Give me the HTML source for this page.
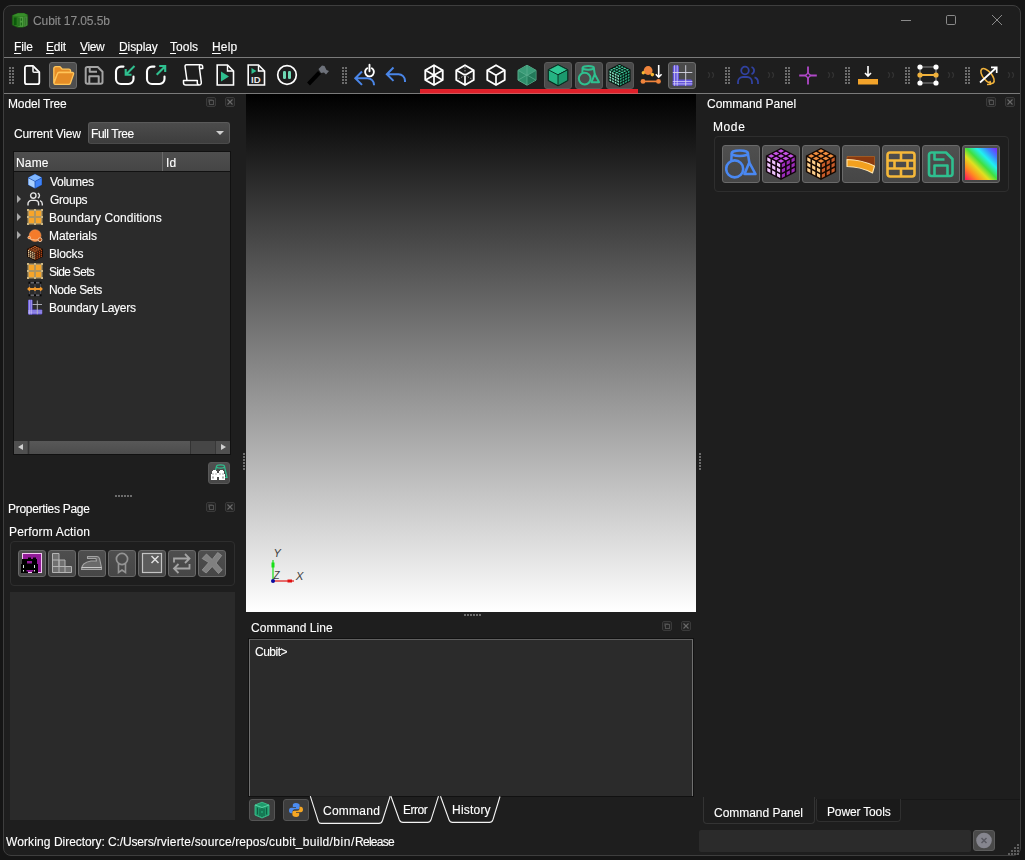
<!DOCTYPE html>
<html lang="en">
<head>
<meta charset="utf-8">
<title>Cubit 17.05.5b</title>
<style>
*{box-sizing:border-box;margin:0;padding:0}
html,body{width:1025px;height:860px;overflow:hidden;background:#151515;}
body{font-family:"Liberation Sans",sans-serif;font-size:12px;color:#fff;position:relative;}
.abs,.abs>*{position:absolute}
#win{position:absolute;left:3px;top:5px;width:1018px;height:851px;background:#1e1e1e;border:1px solid #3e3e3e;border-radius:8px;}
.t{-webkit-text-stroke:0.12px currentColor;will-change:transform;position:absolute;white-space:nowrap;line-height:14px;height:14px;color:#fff;}
.hl{position:absolute;height:1px;background:#7a7a7a}
.ic{position:absolute;width:24px;height:24px;overflow:visible}
.press{position:absolute;width:28px;height:27px;background:#4a4a4a;border-radius:3px;border:1px solid #5a5a5a}
.grip{position:absolute;width:5px;height:17px;background:linear-gradient(#1e1e1e,#1e1e1e) 2px 0/1px 100% no-repeat,repeating-linear-gradient(#6c6c6c 0 2px,#1e1e1e 2px 3px)}
.chev{position:absolute;color:#3c3c3c;font-size:13px;line-height:14px;letter-spacing:-1px}
.dbtn{position:absolute;width:10px;height:10px;border:1px solid #3c3c3c;border-radius:2px;background:#2a2a2a}

.dock-f,.dock-c{position:absolute;width:10px;height:10px;border:1px solid #3a3a3a;border-radius:2px;background:#262626}
.tree-ic{position:absolute;width:16px;height:16px;left:27px}
.exp{position:absolute;left:17px;width:0;height:0;border-left:4px solid #a8a8a8;border-top:4px solid transparent;border-bottom:4px solid transparent}
.pbtn{position:absolute;width:28px;height:27px;top:550px;background:linear-gradient(#4e4e4e,#464646);border-radius:3px;border:1px solid #686868}
.mbtn{position:absolute;width:38px;height:38px;top:145px;background:linear-gradient(#4f4f4f,#464646);border-radius:3px;border:1px solid #6a6a6a}
.mbtn svg,.pbtn svg{position:absolute}
.hdots{position:absolute;height:2px;background-image:linear-gradient(90deg,#6c6c6c 0 2px,transparent 2px);background-size:3px 2px}
.vdots{position:absolute;width:2px;background-image:linear-gradient(#6c6c6c 0 2px,transparent 2px);background-size:2px 3px}
u{text-decoration:underline;text-underline-offset:2px;text-decoration-thickness:1px}
</style>
</head>
<body>
<div id="win"></div>
<!-- TITLE BAR -->
<div id="titlebar" class="abs">
  <svg class="ic" style="left:10px;top:11px;width:20px;height:18px" viewBox="0 0 20 18">
    <path d="M2.300 4.500 8 2.300h6l3.700 1.700v10L13 16.300H7.500L2.300 14Z" fill="#2a7a1e" stroke="#1a5c12" stroke-width=".6" stroke-linejoin="round"/>
    <path d="M2.300 4.500 8 2.300h6l3.700 1.700-4 1.200H7Z" fill="#388e2a"/>
    <path d="M3.800 6.500h2.800v7.500H3.800z" fill="#0d5a0c"/>
    <path d="M8.300 5.800h5v10h-5z" fill="#4c9c3e"/>
    <path d="M9 6.500v8.500M11.300 7.200v2.600M11.300 11.500v3" stroke="#136012" stroke-width="1.100" fill="none"/>
    <path d="M14.300 5.500h3v9l-3 1.500z" fill="#4a8a40"/>
    <path d="M15.700 6.500v8" stroke="#2f7426" stroke-width="1" fill="none"/>
  </svg>
  <div class="t" style="left:33.2px;top:14px;color:#8c8c8c;letter-spacing:-0.09px">Cubit 17.05.5b</div>
  <svg style="left:896px;top:10px;width:112px;height:20px" viewBox="0 0 112 20">
    <path d="M5 10.5h10" stroke="#8a8a8a" stroke-width="1" fill="none"/>
    <rect x="50.5" y="5.5" width="9" height="9" rx="1.2" stroke="#8a8a8a" stroke-width="1" fill="none"/>
    <path d="M96 5l10 10M106 5l-10 10" stroke="#8a8a8a" stroke-width="1" fill="none"/>
  </svg>
</div>
<!-- MENU BAR -->
<div id="menubar" class="abs">
  <div class="t" style="left:14.4px;top:40px;letter-spacing:-0.13px"><u>F</u>ile</div>
  <div class="t" style="left:45.5px;top:40px;letter-spacing:-0.17px"><u>E</u>dit</div>
  <div class="t" style="left:80.2px;top:40px;letter-spacing:-0.4px"><u>V</u>iew</div>
  <div class="t" style="left:119.3px;top:40px;letter-spacing:-0.08px"><u>D</u>isplay</div>
  <div class="t" style="left:170.0px;top:40px;letter-spacing:0.02px"><u>T</u>ools</div>
  <div class="t" style="left:212.4px;top:40px;letter-spacing:0.17px"><u>H</u>elp</div>
  <div class="hl" style="left:4px;top:57px;width:1016px"></div>
</div>
<!-- TOOLBAR -->
<div id="toolbar" class="abs">
  <div class="hl" style="left:4px;top:93px;width:1016px"></div>
  <div class="grip" style="left:9px;top:67px"></div>
  <!-- new -->
  <svg class="ic" style="left:19px;top:63px" viewBox="0 0 24 24"><path d="M7.9 2.9H14l6.300 6.300v10a2 2 0 0 1-2 2H7.900a2 2 0 0 1-2-2V4.900a2 2 0 0 1 2-2Z" fill="none" stroke="#fff" stroke-width="1.800" stroke-linejoin="round"/><path d="M14 3v5.200a1 1 0 0 0 1 1h5.200" fill="none" stroke="#f0f0f0" stroke-width="1.600"/></svg>
  <!-- open -->
  <div class="press" style="left:49px;top:62px;height:27px;border-color:#6a6a6a;background:#4e4e4e"></div>
  <svg class="ic" style="left:51px;top:63px" viewBox="0 0 24 24"><path d="M2.8 5.6a1.900 1.900 0 0 1 1.900-1.900h4.300l2.300 2.500h6.400a1.900 1.900 0 0 1 1.900 1.900V9.500H7.300L2.800 19.500Z" fill="#e48c26" stroke="#ffc55a" stroke-width="1.300" stroke-linejoin="round"/><path d="M3 20 6.500 10.600a1.600 1.600 0 0 1 1.500-1.100h13.600a1.100 1.100 0 0 1 1 1.500l-3.200 9.200a1.600 1.600 0 0 1-1.500 1.100H4a1 1 0 0 1-1-1.300Z" fill="#e48c26" stroke="#ffc55a" stroke-width="1.300" stroke-linejoin="round"/></svg>
  <!-- save -->
  <svg class="ic" style="left:82px;top:63px" viewBox="0 0 24 24"><path d="M5.500 4h10.300l4.700 4.700V19a1.800 1.800 0 0 1-1.800 1.800H5.500A1.800 1.800 0 0 1 3.700 19V5.800A1.800 1.800 0 0 1 5.500 4Z" fill="none" stroke="#a4a4a4" stroke-width="2" stroke-linejoin="round"/><path d="M7.700 4.200v4.500h7.300M7.300 20.500v-7.200h9.400v7.200" fill="none" stroke="#a4a4a4" stroke-width="2" stroke-linejoin="round"/></svg>
  <!-- import -->
  <svg class="ic" style="left:113px;top:63px" viewBox="0 0 24 24"><path d="M10.5 3.600H8a5 5 0 0 0-5 5V16a5 5 0 0 0 5 5h7.500a5 5 0 0 0 5-5v-2.500" fill="none" stroke="#fff" stroke-width="2.100" stroke-linecap="round"/><path d="M21.500 3l-8.500 8.500M12.700 6v5.800h5.800" fill="none" stroke="#2fbf8f" stroke-width="2.100"/></svg>
  <!-- export -->
  <svg class="ic" style="left:144px;top:63px" viewBox="0 0 24 24"><path d="M10.5 3.600H8a5 5 0 0 0-5 5V16a5 5 0 0 0 5 5h7.500a5 5 0 0 0 5-5v-2.500" fill="none" stroke="#fff" stroke-width="2.100" stroke-linecap="round"/><path d="M12.700 11.800l8.500-8.500M15.200 3h6v6" fill="none" stroke="#2fbf8f" stroke-width="2.100"/></svg>
  <!-- scroll -->
  <svg class="ic" style="left:181px;top:63px" viewBox="0 0 24 24"><path d="M5.500 1.800h14a2.200 2.200 0 0 1 2.200 2.200v1.500h-3.200M5.500 1.800c-1.200 0-1.600 1-1.400 2.200L6 17.500M18.500 5.500c-.2-1.500-.2-3.700 1-3.700M18.500 5.500l1.800 13.800a2.300 2.300 0 0 1-2.300 2.700H4.800a2.300 2.300 0 0 1-2.300-2.300v-2.200h13.800v2.200a2 2 0 0 0 2 2.300" fill="none" stroke="#fff" stroke-width="1.500" stroke-linejoin="round"/></svg>
  <!-- play doc -->
  <svg class="ic" style="left:213px;top:63px" viewBox="0 0 24 24"><path d="M4.200 2h10.300l6 6v14H4.200Z" fill="none" stroke="#fff" stroke-width="1.600"/><path d="M14.500 2.300v5.700h5.700" fill="none" stroke="#fff" stroke-width="1.400"/><path d="M8 8.500l8 5-8 5Z" fill="#2fbf8f"/></svg>
  <!-- id doc -->
  <svg class="ic" style="left:244px;top:63px" viewBox="0 0 24 24"><path d="M4.200 2h10.300l6 6v14H4.200Z" fill="none" stroke="#fff" stroke-width="1.600"/><path d="M14.500 2.300v5.700h5.700" fill="none" stroke="#fff" stroke-width="1.400"/><path d="M7.500 5l5 3-5 3Z" fill="#2fbf8f"/><text x="7" y="19.500" font-family="Liberation Sans, sans-serif" font-weight="bold" font-size="9.500" fill="#e8e8e8">ID</text></svg>
  <!-- pause -->
  <svg class="ic" style="left:275px;top:63px" viewBox="0 0 24 24"><circle cx="12" cy="12" r="9.300" fill="none" stroke="#fff" stroke-width="1.700"/><rect x="8" y="8" width="3" height="8" rx="1.200" fill="#6fd9b4"/><rect x="13" y="8" width="3" height="8" rx="1.200" fill="#6fd9b4"/></svg>
  <!-- hammer -->
  <svg class="ic" style="left:306px;top:63px" viewBox="0 0 24 24"><path d="M2.500 21l11-11.500" stroke="#000" stroke-width="4" stroke-linecap="butt"/><path d="M12.500 6l3.500-3.500 2.500.5 2 4 2.500 1-3 3.500-2-2-3 .5Z" fill="#6e727b"/></svg>
  <div class="grip" style="left:342px;top:67px"></div>
  <!-- undo power -->
  <svg class="ic" style="left:353px;top:63px" viewBox="0 0 24 24"><path d="M9 8.500l-6.700 6.700 6.700 6.700M3 15.200H14.500a6.500 6.500 0 0 1 6.500 6.500v.5" fill="none" stroke="#4a86e8" stroke-width="2"/><path d="M14.200 5.200a4.400 4.400 0 1 0 4.600 0M16.500 1.800v6.500" fill="none" stroke="#fff" stroke-width="1.900" stroke-linecap="round"/></svg>
  <!-- undo -->
  <svg class="ic" style="left:384px;top:63px" viewBox="0 0 24 24"><path d="M9.500 4.500l-6.700 6.700 6.700 6.700M3.500 11.200H14.500a6.500 6.500 0 0 1 6.500 6.500v1.300" fill="none" stroke="#4a86e8" stroke-width="2"/></svg>
  <!-- wire cube 1 -->
  <svg class="ic" style="left:422px;top:63px" viewBox="0 0 24 24"><path d="M12 2.200l8.700 5v9.800l-8.700 5-8.700-5V7.200Z" fill="none" stroke="#fff" stroke-width="1.900" stroke-linejoin="round"/><path d="M12 2.500v19M3.500 7.300l17 9.600M20.500 7.300l-17 9.600" fill="none" stroke="#fff" stroke-width="1.700"/></svg>
  <!-- wire cube 2 -->
  <svg class="ic" style="left:453px;top:63px" viewBox="0 0 24 24"><path d="M12 2.200l8.700 5v9.800l-8.700 5-8.700-5V7.200Z" fill="none" stroke="#fff" stroke-width="1.900" stroke-linejoin="round"/><path d="M3.500 7.300 12 12.200l8.500-4.900M12 12.200v9.500" fill="none" stroke="#fff" stroke-width="1.700"/><path d="M12 4v7M12 12.200l-7 4M12 12.200l7 4" fill="none" stroke="#aaa" stroke-width="1" stroke-dasharray="1.500 1.500"/></svg>
  <!-- wire cube 3 -->
  <svg class="ic" style="left:484px;top:63px" viewBox="0 0 24 24"><path d="M12 2.200l8.700 5v9.800l-8.700 5-8.700-5V7.200Z" fill="none" stroke="#fff" stroke-width="1.900" stroke-linejoin="round"/><path d="M3.500 7.300 12 12.200l8.500-4.900M12 12.200v9.500" fill="none" stroke="#fff" stroke-width="1.700"/></svg>
  <!-- green translucent cube -->
  <svg class="ic" style="left:515px;top:63px" viewBox="0 0 24 24"><path d="M12 2.200l9 5.100v9.800l-9 5.100-9-5.100V7.300Z" fill="#2e8e6a" stroke="#58aa8a" stroke-width="1"/><path d="M12 2.500l8.700 5-8.700 5-8.700-5Z" fill="#3b9c78"/><path d="M12 12.500v9.500l8.700-5V7.500Z" fill="#237a5a"/><path d="M12 2.500V12M12 12l-8.700 5M12 12l8.700 5M3.300 7.500l8.700 5 8.700-5M12 12.500V22" fill="none" stroke="#5fb292" stroke-width=".7"/></svg>
  <!-- green cube -->
  <div class="press" style="left:544px;top:62px"></div>
  <svg class="ic" style="left:546px;top:64px" viewBox="0 0 24 24"><path d="M12 .8l9.700 5v10.600L12 21.800l-9.700-5.400V5.800Z" fill="#25b383" stroke="#07281c" stroke-width="1.100" stroke-linejoin="round"/><path d="M12 .8l9.700 5L12 10.800 2.300 5.800Z" fill="#2fc794" stroke="#07281c" stroke-width=".9" stroke-linejoin="round"/><path d="M12 10.800v11l9.700-5.400V5.800Z" fill="#1b9a6e" stroke="#07281c" stroke-width=".9" stroke-linejoin="round"/></svg>
  <!-- shapes -->
  <div class="press" style="left:575px;top:62px"></div>
  <svg class="ic" style="left:577px;top:64px" viewBox="0 0 24 24"><g transform="translate(1 .2) scale(.69)" fill="none" stroke="#2fbf8f" stroke-width="2.900" stroke-linejoin="round"><ellipse cx="14.800" cy="5.300" rx="8.200" ry="2.700"/><path d="M6.700 5.500 6.300 12.500M22.900 5.500l1.400 9"/><circle cx="9.700" cy="20.900" r="8.500"/><path d="M24.300 14.500 30.500 26H19.500Z"/></g></svg>
  <!-- mesh cube -->
  <div class="press" style="left:606px;top:62px"></div>
  <svg class="ic" style="left:608px;top:64px" viewBox="0 0 24 24"><path d="M11.5 0.5 L21.96 5.9 L21.96 16.9 L11.5 22.3 L1.04 16.9 L1.04 5.9Z" fill="#03130d" stroke="#03130d" stroke-width="1.2" stroke-linejoin="round"/><path d="M1.92 5.9 L3.65 5.01 L5.38 5.87 L3.65 6.76ZM4.54 7.21 L6.27 6.32 L7.99 7.19 L6.27 8.08ZM7.16 8.52 L8.88 7.63 L10.61 8.5 L8.88 9.39ZM9.77 9.84 L11.5 8.94 L13.23 9.81 L11.5 10.7ZM4.54 4.55 L6.27 3.66 L7.99 4.52 L6.27 5.41ZM7.16 5.86 L8.88 4.97 L10.61 5.83 L8.88 6.73ZM9.77 7.17 L11.5 6.28 L13.23 7.15 L11.5 8.04ZM12.39 8.48 L14.12 7.59 L15.84 8.46 L14.12 9.35ZM7.16 3.2 L8.88 2.3 L10.61 3.17 L8.88 4.06ZM9.77 4.51 L11.5 3.62 L13.23 4.48 L11.5 5.37ZM12.39 5.82 L14.12 4.93 L15.84 5.8 L14.12 6.69ZM15.01 7.13 L16.73 6.24 L18.46 7.11 L16.73 8ZM9.77 1.84 L11.5 0.95 L13.23 1.82 L11.5 2.71ZM12.39 3.16 L14.12 2.27 L15.84 3.13 L14.12 4.02ZM15.01 4.47 L16.73 3.58 L18.46 4.44 L16.73 5.34ZM17.62 5.78 L19.35 4.89 L21.08 5.76 L19.35 6.65Z" fill="#45cfa0"/><path d="M1.48 6.6 L3.21 7.46 L3.21 9.27 L1.48 8.41ZM1.48 9.34 L3.21 10.21 L3.21 12.02 L1.48 11.16ZM1.48 12.09 L3.21 12.96 L3.21 14.77 L1.48 13.9ZM1.48 14.84 L3.21 15.7 L3.21 17.52 L1.48 16.65ZM4.1 7.91 L5.82 8.77 L5.82 10.59 L4.1 9.72ZM4.1 10.66 L5.82 11.52 L5.82 13.33 L4.1 12.47ZM4.1 13.4 L5.82 14.27 L5.82 16.08 L4.1 15.22ZM4.1 16.15 L5.82 17.02 L5.82 18.83 L4.1 17.96ZM6.71 9.22 L8.44 10.09 L8.44 11.9 L6.71 11.03ZM6.71 11.97 L8.44 12.83 L8.44 14.65 L6.71 13.78ZM6.71 14.72 L8.44 15.58 L8.44 17.39 L6.71 16.53ZM6.71 17.46 L8.44 18.33 L8.44 20.14 L6.71 19.28ZM9.33 10.53 L11.06 11.4 L11.06 13.21 L9.33 12.35ZM9.33 13.28 L11.06 14.15 L11.06 15.96 L9.33 15.09ZM9.33 16.03 L11.06 16.89 L11.06 18.71 L9.33 17.84ZM9.33 18.78 L11.06 19.64 L11.06 21.45 L9.33 20.59Z" fill="#8ce8c8"/><path d="M11.94 11.41 L13.67 10.54 L13.67 12.38 L11.94 13.24ZM11.94 14.19 L13.67 13.33 L13.67 15.16 L11.94 16.03ZM11.94 16.98 L13.67 16.11 L13.67 17.95 L11.94 18.82ZM11.94 19.76 L13.67 18.9 L13.67 20.74 L11.94 21.6ZM14.56 10.09 L16.29 9.23 L16.29 11.07 L14.56 11.93ZM14.56 12.88 L16.29 12.01 L16.29 13.85 L14.56 14.72ZM14.56 15.67 L16.29 14.8 L16.29 16.64 L14.56 17.5ZM14.56 18.45 L16.29 17.59 L16.29 19.42 L14.56 20.29ZM17.18 8.78 L18.9 7.91 L18.9 9.75 L17.18 10.62ZM17.18 11.57 L18.9 10.7 L18.9 12.54 L17.18 13.41ZM17.18 14.35 L18.9 13.49 L18.9 15.33 L17.18 16.19ZM17.18 17.14 L18.9 16.27 L18.9 18.11 L17.18 18.98ZM19.79 7.47 L21.52 6.6 L21.52 8.44 L19.79 9.31ZM19.79 10.25 L21.52 9.39 L21.52 11.23 L19.79 12.09ZM19.79 13.04 L21.52 12.17 L21.52 14.01 L19.79 14.88ZM19.79 15.83 L21.52 14.96 L21.52 16.8 L19.79 17.67Z" fill="#2fa880"/></svg>
  <div style="left:420px;top:89px;width:218px;height:5px;background:linear-gradient(#e0202a 0 4px,#c95a5e 4px)"></div>
  <!-- nodes/arrow -->
  <svg class="ic" style="left:639px;top:63px" viewBox="0 0 24 24"><path d="M4 18.400h15.500" stroke="#f0843c" stroke-width="1.700"/><circle cx="4" cy="18.400" r="2.400" fill="#f0843c"/><circle cx="19.500" cy="18.400" r="2.400" fill="#f0843c"/><circle cx="9.100" cy="7.500" r="4.400" fill="#f0843c"/><circle cx="4.300" cy="9.700" r="1.700" fill="#f7b733"/><circle cx="13.300" cy="11.600" r="1.800" fill="#f7b733"/><path d="M19.700 2v12M16.800 11.300l2.900 2.900 2.900-2.900" fill="none" stroke="#fff" stroke-width="1.600"/></svg>
  <!-- grid -->
  <div class="press" style="left:668px;top:62px;border-color:#6c6c6c;height:27px"></div>
  <svg class="ic" style="left:670px;top:64px" viewBox="0 0 24 24"><rect x="2.800" y="1.200" width="6.200" height="20.600" rx="1.500" fill="#6253dc"/><rect x="2.800" y="15.500" width="19.500" height="6.300" rx="1.500" fill="#6253dc"/><path d="M4.600 1.200v20.600M7.200 1.200v20.600M2.800 17.500h19.500M2.800 19.900h19.500" fill="none" stroke="#e4defc" stroke-width=".7"/><path d="M15.700 1.200v20.600M2.800 8.500h19.500" fill="none" stroke="#d8d8e4" stroke-width=".9"/></svg>
  <svg style="left:707px;top:71px;width:9px;height:8px" viewBox="0 0 9 8"><path d="M1 1.200q3.200 2.800 0 5.600M5 1.200q3.200 2.800 0 5.600" fill="none" stroke="#323232" stroke-width="1.300"/></svg>
  <div class="grip" style="left:725px;top:67px"></div>
  <!-- people -->
  <svg class="ic" style="left:736px;top:63px" viewBox="0 0 24 24"><circle cx="9" cy="7.500" r="3.800" fill="none" stroke="#3142a0" stroke-width="1.800"/><path d="M2 21v-2a5 5 0 0 1 5-5h4a5 5 0 0 1 5 5v2" fill="none" stroke="#3142a0" stroke-width="1.800"/><path d="M15.500 4a3.800 3.800 0 0 1 0 7.200M18.500 14.300a5 5 0 0 1 3.500 4.700v2" fill="none" stroke="#3142a0" stroke-width="1.800"/></svg>
  <svg style="left:767px;top:71px;width:9px;height:8px" viewBox="0 0 9 8"><path d="M1 1.200q3.200 2.800 0 5.600M5 1.200q3.200 2.800 0 5.600" fill="none" stroke="#323232" stroke-width="1.300"/></svg>
  <div class="grip" style="left:785px;top:67px"></div>
  <!-- plus -->
  <svg class="ic" style="left:796px;top:63px" viewBox="0 0 24 24"><path d="M12 3.500v18M3.200 12.500h17.600" stroke="#b048c8" stroke-width="1.800"/><path d="M12 10 14.500 12.500 12 15 9.500 12.500Z" fill="#1e1e1e" stroke="#b048c8" stroke-width="1.300"/></svg>
  <svg style="left:827px;top:71px;width:9px;height:8px" viewBox="0 0 9 8"><path d="M1 1.200q3.200 2.800 0 5.600M5 1.200q3.200 2.800 0 5.600" fill="none" stroke="#323232" stroke-width="1.300"/></svg>
  <div class="grip" style="left:845px;top:67px"></div>
  <!-- download -->
  <svg class="ic" style="left:856px;top:63px" viewBox="0 0 24 24"><rect x="2" y="16" width="20" height="5.500" fill="#f2a32a"/><path d="M12 3v10M9 10l3 3 3-3" fill="none" stroke="#fff" stroke-width="1.600"/></svg>
  <svg style="left:887px;top:71px;width:9px;height:8px" viewBox="0 0 9 8"><path d="M1 1.200q3.200 2.800 0 5.600M5 1.200q3.200 2.800 0 5.600" fill="none" stroke="#323232" stroke-width="1.300"/></svg>
  <div class="grip" style="left:905px;top:67px"></div>
  <!-- nodes -->
  <svg class="ic" style="left:916px;top:63px" viewBox="0 0 24 24"><path d="M4 4h16M4 20h16M4 4v16M20 4v16" stroke="#8a8a8a" stroke-width="1.200"/><path d="M4 12h16" stroke="#f0b23c" stroke-width="2"/><circle cx="4" cy="4" r="2.600" fill="#fff"/><circle cx="20" cy="4" r="2.600" fill="#fff"/><circle cx="4" cy="20" r="2.600" fill="#fff"/><circle cx="20" cy="20" r="2.600" fill="#fff"/><circle cx="4" cy="12" r="2.600" fill="#f0b23c"/><circle cx="20" cy="12" r="2.600" fill="#f0b23c"/></svg>
  <svg style="left:947px;top:71px;width:9px;height:8px" viewBox="0 0 9 8"><path d="M1 1.200q3.200 2.800 0 5.600M5 1.200q3.200 2.800 0 5.600" fill="none" stroke="#323232" stroke-width="1.300"/></svg>
  <div class="grip" style="left:965px;top:67px"></div>
  <!-- rotate arrow -->
  <svg class="ic" style="left:976px;top:63px" viewBox="0 0 24 24"><ellipse cx="11.500" cy="13" rx="4.300" ry="9" transform="rotate(-40 11.500 13)" fill="none" stroke="#f0b23c" stroke-width="1.600"/><path d="M4 19.500 20.500 4.500M15 4.300h5.700V10" fill="none" stroke="#fff" stroke-width="1.700"/><path d="M11 21.500l3.500-.2-.5-3.500" fill="none" stroke="#f0b23c" stroke-width="1.600"/></svg>
  <svg style="left:1007px;top:71px;width:9px;height:8px" viewBox="0 0 9 8"><path d="M1 1.200q3.200 2.800 0 5.600M5 1.200q3.200 2.800 0 5.600" fill="none" stroke="#323232" stroke-width="1.300"/></svg>
</div>
<!-- LEFT DOCK -->
<div id="left" class="abs">
  <div class="t" style="left:7.5px;top:97px;letter-spacing:-0.14px">Model Tree</div>
  <svg style="left:206px;top:97px;width:30px;height:12px" viewBox="0 0 30 12"><rect x=".5" y=".5" width="9" height="9" rx="1.5" fill="#242424" stroke="#3a3a3a"/><rect x="3.500" y="3.500" width="4" height="4" fill="none" stroke="#505050"/><path d="M2.500 5.500v-3h4" fill="none" stroke="#3c3c3c"/><rect x="19.500" y=".5" width="9" height="9" rx="1.500" fill="#242424" stroke="#3a3a3a"/><path d="M21.500 2.500l5 5M26.500 2.500l-5 5" stroke="#6a6a6a" stroke-width="1.100" fill="none"/></svg>
  <div class="t" style="left:13.5px;top:127px;letter-spacing:-0.21px">Current View</div>
  <div style="left:88px;top:122px;width:142px;height:22px;border-radius:3px;background:linear-gradient(#4c4c4c,#3d3d3d);border:1px solid #5a5a5a;border-bottom-color:#4a4a4a"></div>
  <div class="t" style="left:91.4px;top:127px;letter-spacing:-0.44px">Full Tree</div>
  <div style="left:216px;top:131px;width:0;height:0;border-top:4px solid #cfcfcf;border-left:4px solid transparent;border-right:4px solid transparent"></div>
  <!-- tree -->
  <div style="left:13px;top:151px;width:218px;height:304px;background:#111"></div>
  <div style="left:14px;top:152px;width:216px;height:19px;background:linear-gradient(#4f4f4f,#454545)"></div>
  <div style="left:162px;top:152px;width:1px;height:19px;background:#6a6a6a"></div>
  <div class="t" style="left:15.5px;top:156px;letter-spacing:0.17px">Name</div>
  <div class="t" style="left:165.5px;top:156px;letter-spacing:0.1px">Id</div>
  <div style="left:14px;top:172px;width:216px;height:269px;background:#2b2b2b"></div>
  <div id="rows" class="abs">
<svg class="tree-ic" style="top:173px" viewBox="0 0 16 16"><path d="M8 .8 15 4.500v7.600L8 15.700 1 12.100V4.500Z" fill="#1d4fae"/><path d="M8 1.200 14.600 4.600 8 8 1.400 4.600Z" fill="#7fb6ff"/><path d="M1.400 5.200 7.600 8.400v6.600L1.400 11.800Z" fill="#a9d0ff"/><path d="M8.400 8.400l6.200-3.200v6.600L8.400 15Z" fill="#3f83f8"/></svg>
<div class="t" style="left:49.8px;top:175px;letter-spacing:-0.32px">Volumes</div>
<div class="exp" style="top:195px"></div>
<svg class="tree-ic" style="top:191px" viewBox="0 0 16 16"><circle cx="6.300" cy="4.600" r="2.700" fill="none" stroke="#e4e4e4" stroke-width="1.400"/><path d="M1 14.500v-1.700a3.400 3.400 0 0 1 3.400-3.400h3.800a3.400 3.400 0 0 1 3.400 3.400v1.700" fill="none" stroke="#e4e4e4" stroke-width="1.400"/><path d="M10.800 2.100a2.700 2.700 0 0 1 0 5M13 9.700a3.400 3.400 0 0 1 2.300 3.200v1.600" fill="none" stroke="#e4e4e4" stroke-width="1.400"/></svg>
<div class="t" style="left:49.8px;top:193px;letter-spacing:-0.36px">Groups</div>
<div class="exp" style="top:213px"></div>
<svg class="tree-ic" style="top:209px" viewBox="0 0 16 16"><rect x=".5" y=".5" width="15" height="15" fill="#b0955f"/><path d="M2 2h5v5H2zM9 2h5v5H9zM2 9h5v5H2zM9 9h5v5H9z" fill="#f6a52a"/><path d="M0 0h2v2H0zM14 0h2v2h-2zM0 14h2v2H0zM14 14h2v2h-2zM7 0h2v2H7zM7 14h2v2H7zM0 7h2v2H0zM14 7h2v2h-2z" fill="#cdb682"/></svg>
<div class="t" style="left:48.8px;top:211px;letter-spacing:0.08px">Boundary Conditions</div>
<div class="exp" style="top:231px"></div>
<svg class="tree-ic" style="top:227px" viewBox="0 0 16 16"><circle cx="8.100" cy="8.600" r="5.900" fill="#f47b2a" stroke="#f79a58" stroke-width=".6"/><path d="M2 11c2 2 8 2.800 11 1" fill="none" stroke="#f9c9a0" stroke-width="1"/><circle cx="2.200" cy="10.600" r="1.300" fill="#f47b2a" stroke="#fbd0a8" stroke-width=".8"/><circle cx="13" cy="12.700" r="1.900" fill="#a84a14" stroke="#fbd0a8" stroke-width=".9"/></svg>
<div class="t" style="left:48.8px;top:229px;letter-spacing:-0.1px">Materials</div>
<svg class="tree-ic" style="top:245px" viewBox="0 0 16 16"><path d="M8 0.5 L15.28 4.26 L15.28 11.54 L8 15.3 L0.72 11.54 L0.72 4.26Z" fill="#1a0a02" stroke="#1a0a02" stroke-width="1.2" stroke-linejoin="round"/><path d="M1.3 4.25 L2.54 3.61 L3.78 4.21 L2.54 4.84ZM3.12 5.12 L4.36 4.49 L5.6 5.08 L4.36 5.72ZM4.94 6 L6.18 5.36 L7.42 5.96 L6.18 6.59ZM6.76 6.87 L8 6.24 L9.24 6.83 L8 7.47ZM3.12 3.31 L4.36 2.67 L5.6 3.27 L4.36 3.9ZM4.94 4.18 L6.18 3.55 L7.42 4.14 L6.18 4.78ZM6.76 5.06 L8 4.42 L9.24 5.02 L8 5.65ZM8.58 5.93 L9.82 5.3 L11.06 5.89 L9.82 6.53ZM4.94 2.37 L6.18 1.73 L7.42 2.33 L6.18 2.96ZM6.76 3.24 L8 2.61 L9.24 3.2 L8 3.84ZM8.58 4.12 L9.82 3.48 L11.06 4.08 L9.82 4.71ZM10.4 4.99 L11.64 4.36 L12.88 4.95 L11.64 5.59ZM6.76 1.43 L8 0.79 L9.24 1.39 L8 2.02ZM8.58 2.3 L9.82 1.67 L11.06 2.26 L9.82 2.9ZM10.4 3.18 L11.64 2.54 L12.88 3.14 L11.64 3.77ZM12.22 4.05 L13.46 3.42 L14.7 4.01 L13.46 4.65Z" fill="#e87434"/><path d="M1.01 4.69 L2.25 5.29 L2.25 6.52 L1.01 5.93ZM1.01 6.51 L2.25 7.11 L2.25 8.34 L1.01 7.75ZM1.01 8.33 L2.25 8.93 L2.25 10.16 L1.01 9.57ZM1.01 10.15 L2.25 10.75 L2.25 11.98 L1.01 11.39ZM2.83 5.57 L4.07 6.16 L4.07 7.4 L2.83 6.8ZM2.83 7.39 L4.07 7.98 L4.07 9.22 L2.83 8.62ZM2.83 9.21 L4.07 9.8 L4.07 11.04 L2.83 10.44ZM2.83 11.03 L4.07 11.62 L4.07 12.86 L2.83 12.26ZM4.65 6.44 L5.89 7.04 L5.89 8.27 L4.65 7.68ZM4.65 8.26 L5.89 8.86 L5.89 10.09 L4.65 9.5ZM4.65 10.08 L5.89 10.68 L5.89 11.91 L4.65 11.32ZM4.65 11.9 L5.89 12.5 L5.89 13.73 L4.65 13.14ZM6.47 7.32 L7.71 7.91 L7.71 9.15 L6.47 8.55ZM6.47 9.14 L7.71 9.73 L7.71 10.97 L6.47 10.37ZM6.47 10.96 L7.71 11.55 L7.71 12.79 L6.47 12.19ZM6.47 12.78 L7.71 13.37 L7.71 14.61 L6.47 14.01Z" fill="#fbd9a4"/><path d="M8.29 7.92 L9.53 7.33 L9.53 8.61 L8.29 9.2ZM8.29 9.81 L9.53 9.21 L9.53 10.49 L8.29 11.09ZM8.29 11.69 L9.53 11.1 L9.53 12.38 L8.29 12.97ZM8.29 13.58 L9.53 12.98 L9.53 14.26 L8.29 14.86ZM10.11 7.05 L11.35 6.45 L11.35 7.73 L10.11 8.33ZM10.11 8.93 L11.35 8.34 L11.35 9.62 L10.11 10.21ZM10.11 10.82 L11.35 10.22 L11.35 11.5 L10.11 12.1ZM10.11 12.7 L11.35 12.11 L11.35 13.39 L10.11 13.98ZM11.93 6.17 L13.17 5.58 L13.17 6.86 L11.93 7.45ZM11.93 8.06 L13.17 7.46 L13.17 8.74 L11.93 9.34ZM11.93 9.94 L13.17 9.35 L13.17 10.63 L11.93 11.22ZM11.93 11.83 L13.17 11.23 L13.17 12.51 L11.93 13.11ZM13.75 5.3 L14.99 4.7 L14.99 5.98 L13.75 6.58ZM13.75 7.18 L14.99 6.59 L14.99 7.87 L13.75 8.46ZM13.75 9.07 L14.99 8.47 L14.99 9.75 L13.75 10.35ZM13.75 10.95 L14.99 10.36 L14.99 11.64 L13.75 12.23Z" fill="#b84a1a"/></svg>
<div class="t" style="left:48.8px;top:247px;letter-spacing:-0.18px">Blocks</div>
<svg class="tree-ic" style="top:263px" viewBox="0 0 16 16"><rect x=".5" y=".5" width="15" height="15" fill="#b0955f"/><path d="M2 2h5v5H2zM9 2h5v5H9zM2 9h5v5H2zM9 9h5v5H9z" fill="#f6a52a"/><path d="M0 0h2v2H0zM14 0h2v2h-2zM0 14h2v2H0zM14 14h2v2h-2zM7 0h2v2H7zM7 14h2v2H7zM0 7h2v2H0zM14 7h2v2h-2z" fill="#cdb682"/></svg>
<div class="t" style="left:48.8px;top:265px;letter-spacing:-0.7px">Side Sets</div>
<svg class="tree-ic" style="top:281px" viewBox="0 0 16 16"><path d="M2.500 1.800h11M2.500 14.200h11" stroke="#66666e" stroke-width="1.600"/><path d="M2.500 2.500v11M8 2.500v11M13.500 2.500v11" stroke="#4c4c54" stroke-width="1"/><path d="M1.500 .8h2v2h-2zM7 .8h2v2H7zM12.500 .8h2v2h-2zM1.500 13.200h2v2h-2zM7 13.200h2v2H7zM12.500 13.200h2v2h-2z" fill="#050505"/><path d="M1.500 8h13" stroke="#f39a2c" stroke-width="2"/><path d="M2.300 5.800 4.500 8 2.300 10.200.1 8ZM8 5.800 10.200 8 8 10.200 5.800 8ZM13.700 5.800 15.900 8 13.700 10.200 11.500 8Z" fill="#f39a2c"/></svg>
<div class="t" style="left:48.8px;top:283px;letter-spacing:-0.36px">Node Sets</div>
<svg class="tree-ic" style="top:299px" viewBox="0 0 16 16"><rect x="1" y=".8" width="4.500" height="14.600" rx=".8" fill="#5f50d8"/><rect x="1" y="10.500" width="14.200" height="4.900" rx=".8" fill="#5f50d8"/><path d="M2.300 .8v14.600M4.200 .8v14.600M1 12h14.200M1 13.900h14.200" fill="none" stroke="#e8e2ff" stroke-width=".6"/><path d="M10.300 1.500v13.800M5.500 5.500h9.500" fill="none" stroke="#b8b8c4" stroke-width=".9"/></svg>
<div class="t" style="left:48.8px;top:301px;letter-spacing:-0.27px">Boundary Layers</div>
</div><!--/rows-->
  <!-- scrollbar -->
  <div style="left:14px;top:441px;width:216px;height:13px;background:#464646"></div>
  <div style="left:14px;top:441px;width:13px;height:13px;background:#505050"></div>
  <div style="left:28px;top:441px;width:1px;height:13px;background:#333"></div>
  <div style="left:30px;top:441px;width:160px;height:13px;background:linear-gradient(#585858,#4c4c4c)"></div>
  <div style="left:190px;top:441px;width:1px;height:13px;background:#333"></div>
  <div style="left:216px;top:441px;width:14px;height:13px;background:#505050"></div>
  <div style="left:18px;top:444px;width:0;height:0;border-right:5px solid #d0d0d0;border-top:3.500px solid transparent;border-bottom:3.500px solid transparent"></div>
  <div style="left:221px;top:444px;width:0;height:0;border-left:5px solid #d0d0d0;border-top:3.500px solid transparent;border-bottom:3.500px solid transparent"></div><div style="left:215px;top:441px;width:1px;height:13px;background:#383838"></div>
  <!-- find button -->
  <div style="left:208px;top:462px;width:22px;height:22px;background:linear-gradient(#505050,#474747);border:1px solid #585858;border-radius:3px"></div>
  <svg style="left:208px;top:462px;width:22px;height:22px" viewBox="0 0 22 22"><ellipse cx="12.500" cy="4.500" rx="4" ry="1.600" fill="none" stroke="#2fbf8f" stroke-width="1.200"/><path d="M8.500 4.500 7 10M16.500 4.500 19 15.500H14" fill="none" stroke="#2fbf8f" stroke-width="1.200"/><path d="M9 12.500h4" stroke="#2fbf8f" stroke-width="1.500"/><path d="M4 9h1V8h3v1h1v2h2V9h1V8h3v1h1v3h1v6h-6v-3h-2v3H3v-6h1Z" fill="#fff"/><path d="M4.500 11.500h1v1h-1zM7.500 11.500h1v1h-1zM4.500 14.500h1v2h-1zM11.500 11.500h1v1h-1zM14.500 11.500h1v1h-1zM14.500 14.500h1v2h-1z" fill="#5a5a5a"/></svg>
  <div class="hdots" style="left:115px;top:495px;width:18px"></div>
  <div class="vdots" style="left:243px;top:453px;height:18px"></div>
  <!-- properties -->
  <div class="t" style="left:8px;top:502px;letter-spacing:-0.3px">Properties Page</div>
  <svg style="left:206px;top:502px;width:30px;height:12px" viewBox="0 0 30 12"><rect x=".5" y=".5" width="9" height="9" rx="1.5" fill="#242424" stroke="#3a3a3a"/><rect x="3.500" y="3.500" width="4" height="4" fill="none" stroke="#505050"/><path d="M2.500 5.500v-3h4" fill="none" stroke="#3c3c3c"/><rect x="19.500" y=".5" width="9" height="9" rx="1.500" fill="#242424" stroke="#3a3a3a"/><path d="M21.500 2.500l5 5M26.500 2.500l-5 5" stroke="#6a6a6a" stroke-width="1.100" fill="none"/></svg>
  <div class="t" style="left:9px;top:525px;letter-spacing:0.17px">Perform Action</div>
  <div style="left:10px;top:541px;width:225px;height:45px;border:1px solid #2e2e2e;border-radius:4px"></div>
  <div id="pbtns" class="abs">
<div class="pbtn" style="left:18px"></div>
<svg style="left:18px;top:550px;width:28px;height:27px" viewBox="0 0 28 27"><rect x="4.500" y="3.500" width="19" height="19" fill="#921a98" stroke="#f3c6f3" stroke-width="1"/><path d="M6 9h4V7.500h3V9h2V7.500h3V9h1v5h1v9H14v-2h-4v2H3v-9h1v-5h2Z" fill="#000"/><path d="M9 11h5v2.500H9zM8.500 20h7v1.500h-7z" fill="#921a98"/><path d="M5.500 15v3M5.500 20v1.500M16.500 15v3M16.500 20v1.500" stroke="#cfe6d8" stroke-width="1"/></svg>
<div class="pbtn" style="left:48px"></div>
<svg style="left:48px;top:550px;width:28px;height:27px" viewBox="0 0 28 27"><path d="M4.500 3.500h6.500v6.500h6v6.500h6.500v6H4.500Z" fill="#707070" stroke="#b4b4b4" stroke-width="1"/><path d="M4.500 10h6.500v12.500M4.500 16.500h12.500v6M11 10v6.500" fill="none" stroke="#b4b4b4" stroke-width="1"/></svg>
<div class="pbtn" style="left:78px"></div>
<svg style="left:78px;top:550px;width:28px;height:27px" viewBox="0 0 28 27"><path d="M9.500 6.500h9.500c1.500 0 2.300 1 2.600 2.300L23.500 17.500v2H3.500c0-4 3-7.500 9.500-8.500h5.500l-.5-2.500H9.500Z" fill="#6a6a6a" stroke="#a4a4a4" stroke-width="1.100" stroke-linejoin="round"/><path d="M3.500 17.500h20" stroke="#c8c8c8" stroke-width="1"/><path d="M13 12.500h4" stroke="#666" stroke-width="1"/></svg>
<div class="pbtn" style="left:108px"></div>
<svg style="left:108px;top:550px;width:28px;height:27px" viewBox="0 0 28 27"><circle cx="14" cy="9" r="5.600" fill="none" stroke="#949494" stroke-width="1.700"/><path d="M10.500 14v8.500l3.500-2.500 3.500 2.500V14" fill="none" stroke="#949494" stroke-width="1.600"/></svg>
<div class="pbtn" style="left:138px"></div>
<svg style="left:138px;top:550px;width:28px;height:27px" viewBox="0 0 28 27"><rect x="4.500" y="3.500" width="19" height="19" fill="#5c5c5c" stroke="#c4c4c4" stroke-width="1.200"/><path d="M13.500 6l7 7M20.500 6l-7 7" stroke="#e0e0e0" stroke-width="1.500"/></svg>
<div class="pbtn" style="left:168px"></div>
<svg style="left:168px;top:550px;width:28px;height:27px" viewBox="0 0 28 27"><path d="M6 12.500V8.500h15M17 4l4.500 4.500L17 13M21.500 14v4.500H6.500M10.500 14l-4.500 4.500 4.500 4.500" fill="none" stroke="#a4a4a4" stroke-width="1.800"/></svg>
<div class="pbtn" style="left:198px"></div>
<svg style="left:198px;top:550px;width:28px;height:27px" viewBox="0 0 28 27"><path d="M4.200 8.500 8.500 4l5.700 5.500 5.500-7 4 3-5.700 7.500 6.200 7-3.700 3.500-6.300-7-6 6.500-4-3 6.500-7.500Z" fill="#808080" stroke="#959595" stroke-width=".8" stroke-linejoin="round"/></svg>
</div><!--/pbtns-->
  <div style="left:10px;top:592px;width:225px;height:228px;background:#2a2a2a"></div>
</div>
<!-- VIEWPORT -->
<div id="viewport" style="position:absolute;left:246px;top:94px;width:450px;height:518px;background:linear-gradient(#000,#fff)">
<svg style="position:absolute;left:20px;top:450px;width:50px;height:50px" viewBox="0 0 50 50">
<path d="M7 37V16" stroke="#16e016" stroke-width="1.200"/><path d="M7 18.500v5" stroke="#16e016" stroke-width="3"/>
<path d="M7 37h21" stroke="#e01010" stroke-width="1.200"/><path d="M21.500 37h4.500" stroke="#e01010" stroke-width="3"/>
<circle cx="7" cy="37" r="2" fill="#0a0aa0"/>
<text x="7.500" y="12.500" font-family="Liberation Sans, sans-serif" font-style="italic" font-size="11" fill="#404040">Y</text>
<text x="7.500" y="35" font-family="Liberation Sans, sans-serif" font-style="italic" font-size="10" fill="#404040">Z</text>
<text x="29.700" y="35.800" font-family="Liberation Sans, sans-serif" font-style="italic" font-size="11.500" fill="#404040">X</text>
</svg>
</div><!--/viewport-->
<!-- COMMAND LINE -->
<div id="cmdline" class="abs">
  <div class="hdots" style="left:464px;top:614px;width:18px"></div>
  <div class="t" style="left:250.8px;top:621px;letter-spacing:0.02px">Command Line</div>
  <svg style="left:662px;top:621px;width:30px;height:12px" viewBox="0 0 30 12"><rect x=".5" y=".5" width="9" height="9" rx="1.5" fill="#242424" stroke="#3a3a3a"/><rect x="3.500" y="3.500" width="4" height="4" fill="none" stroke="#505050"/><path d="M2.500 5.500v-3h4" fill="none" stroke="#3c3c3c"/><rect x="19.500" y=".5" width="9" height="9" rx="1.500" fill="#242424" stroke="#3a3a3a"/><path d="M21.500 2.500l5 5M26.500 2.500l-5 5" stroke="#6a6a6a" stroke-width="1.100" fill="none"/></svg>
  <div style="left:248px;top:638px;width:446px;height:159px;background:#111"></div>
  <div style="left:249px;top:639px;width:444px;height:157px;background:#2b2b2b;border:1px solid #707070;border-top-color:#606060;border-bottom:none"></div>
  <div class="t" style="left:254.8px;top:645px;letter-spacing:-0.5px">Cubit&gt;</div>
  <div style="left:249px;top:799px;width:26px;height:22px;background:#3d3d3d;border:1px solid #555;border-radius:3px"></div>
  <svg style="left:253px;top:801px;width:18px;height:18px" viewBox="0 0 18 18"><path d="M2 4 9 1.200 16 4v10L9 17 2 14Z" fill="#1f9a6c" stroke="#3fc894" stroke-width=".8" stroke-linejoin="round"/><path d="M2 4l7 2.500L16 4" fill="none" stroke="#5fd8aa" stroke-width=".9"/><path d="M4.500 6.500v7M7 7.500v7.500M11 7.500v7.500M13.500 6.500v7M9 7v3M9 12v4" fill="none" stroke="#0f5e42" stroke-width="1.100"/></svg>
  <div style="left:283px;top:799px;width:26px;height:22px;background:#3d3d3d;border:1px solid #555;border-radius:3px"></div>
  <svg style="left:288px;top:802px;width:16px;height:16px" viewBox="0 0 16 16"><path d="M7.800 1C5.500 1 4.800 2 4.800 3.200V5H8v.700H3.200C1.800 5.700 1 6.800 1 8.500s.800 2.800 2.200 2.800h1.300V9.500c0-1.300 1-2.300 2.300-2.300h3c1 0 1.800-.800 1.800-1.800V3.200C11.600 2 10.500 1 7.800 1Z" fill="#4b8bf0"/><path d="M8.200 15c2.300 0 3-1 3-2.200V11H8v-.700h4.800c1.400 0 2.200-1.100 2.200-2.800s-.800-2.800-2.200-2.800h-1.300v1.800c0 1.300-1 2.300-2.300 2.300h-3c-1 0-1.800.800-1.800 1.800v2.200C4.400 14 5.500 15 8.200 15Z" fill="#f5a623"/></svg>
  <svg style="left:305px;top:793px;width:200px;height:34px" viewBox="0 0 200 34">
    <path d="M5.300 3.200 L13.400 28.600 Q14 30.400 16.200 30.400 H74 Q76.500 30.400 77.500 27.500 L85.200 3.200" fill="#252525" stroke="#f4f4f4" stroke-width="1.100"/>
    <path d="M85.900 3.200 L94.300 26.800 Q95.300 29.400 98 29.400 H122.500 Q125 29.400 126 26.800 L133.500 3.200" fill="none" stroke="#f4f4f4" stroke-width="1.100"/>
    <path d="M135.500 3.200 L144 26.800 Q145 29.400 147.500 29.400 H184.400 Q187 29.400 188 26.500 L195 3.500" fill="none" stroke="#f4f4f4" stroke-width="1.100"/>
  </svg>
  <div class="t" style="left:322.5px;top:804px;letter-spacing:0.25px">Command</div>
  <div class="t" style="left:403.2px;top:803px;letter-spacing:-0.5px">Error</div>
  <div class="t" style="left:451.5px;top:803px;letter-spacing:0.21px">History</div>
</div>
<!-- RIGHT DOCK -->
<div id="right" class="abs">
  <div class="vdots" style="left:699px;top:453px;height:18px"></div>
  <div class="t" style="left:706.5px;top:97px;letter-spacing:-0.02px">Command Panel</div>
  <svg style="left:986px;top:97px;width:30px;height:12px" viewBox="0 0 30 12"><rect x=".5" y=".5" width="9" height="9" rx="1.5" fill="#242424" stroke="#3a3a3a"/><rect x="3.500" y="3.500" width="4" height="4" fill="none" stroke="#505050"/><path d="M2.500 5.500v-3h4" fill="none" stroke="#3c3c3c"/><rect x="19.500" y=".5" width="9" height="9" rx="1.500" fill="#242424" stroke="#3a3a3a"/><path d="M21.500 2.500l5 5M26.500 2.500l-5 5" stroke="#6a6a6a" stroke-width="1.100" fill="none"/></svg>
  <div class="t" style="left:712.5px;top:120px;letter-spacing:0.6px">Mode</div>
  <div style="left:714px;top:136px;width:295px;height:56px;border:1px solid #2e2e2e;border-radius:4px"></div>
  <div id="mbtns" class="abs">
<div class="mbtn" style="left:722px"></div>
<svg style="left:725px;top:148px;width:32px;height:32px" viewBox="0 0 32 32"><ellipse cx="14.8" cy="5.3" rx="8.2" ry="2.7" fill="none" stroke="#4a88f2" stroke-width="2.5"/><path d="M6.700 5.500 6.300 12.500M22.900 5.500l1.400 9" fill="none" stroke="#4a88f2" stroke-width="2.500"/><circle cx="9.700" cy="20.900" r="8.500" fill="none" stroke="#4a88f2" stroke-width="2.600"/><path d="M24.300 14.500 30.500 26H19.500Z" fill="none" stroke="#4a88f2" stroke-width="2.600" stroke-linejoin="round"/></svg>
<div class="mbtn" style="left:762px"></div>
<svg style="left:765px;top:148px;width:32px;height:32px" viewBox="0 0 32 32"><path d="M16 0.5 L30.56 8.02 L30.56 23.78 L16 31.3 L1.44 23.78 L1.44 8.02Z" fill="#14040f" stroke="#14040f" stroke-width="1.2" stroke-linejoin="round"/><path d="M3.09 8.02 L6.29 6.36 L9.5 8.01 L6.29 9.67ZM7.94 10.52 L11.15 8.86 L14.35 10.51 L11.15 12.17ZM12.8 13.02 L16 11.36 L19.2 13.01 L16 14.67ZM7.94 5.51 L11.15 3.86 L14.35 5.51 L11.15 7.16ZM12.8 8.01 L16 6.36 L19.2 8.01 L16 9.66ZM17.65 10.51 L20.85 8.86 L24.06 10.51 L20.85 12.16ZM12.8 3.01 L16 1.35 L19.2 3 L16 4.66ZM17.65 5.51 L20.85 3.85 L24.06 5.5 L20.85 7.16ZM22.5 8.01 L25.71 6.35 L28.91 8 L25.71 9.66Z" fill="#c552e6"/><path d="M2.27 9.34 L5.47 10.99 L5.47 14.46 L2.27 12.81ZM2.27 14.59 L5.47 16.24 L5.47 19.71 L2.27 18.06ZM2.27 19.84 L5.47 21.49 L5.47 24.96 L2.27 23.31ZM7.12 11.84 L10.32 13.49 L10.32 16.96 L7.12 15.31ZM7.12 17.09 L10.32 18.74 L10.32 22.21 L7.12 20.56ZM7.12 22.34 L10.32 23.99 L10.32 27.46 L7.12 25.81ZM11.97 14.34 L15.17 15.99 L15.17 19.46 L11.97 17.81ZM11.97 19.59 L15.17 21.24 L15.17 24.71 L11.97 23.06ZM11.97 24.84 L15.17 26.49 L15.17 29.96 L11.97 28.31Z" fill="#f0c4ff"/><path d="M16.83 15.99 L20.03 14.34 L20.03 17.81 L16.83 19.46ZM16.83 21.25 L20.03 19.6 L20.03 23.07 L16.83 24.72ZM16.83 26.51 L20.03 24.86 L20.03 28.33 L16.83 29.98ZM21.68 13.49 L24.88 11.84 L24.88 15.31 L21.68 16.96ZM21.68 18.75 L24.88 17.1 L24.88 20.57 L21.68 22.22ZM21.68 24.01 L24.88 22.36 L24.88 25.83 L21.68 27.48ZM26.53 10.99 L29.73 9.34 L29.73 12.81 L26.53 14.46ZM26.53 16.25 L29.73 14.6 L29.73 18.07 L26.53 19.72ZM26.53 21.51 L29.73 19.86 L29.73 23.33 L26.53 24.98Z" fill="#9c2cba"/></svg>
<div class="mbtn" style="left:802px"></div>
<svg style="left:805px;top:148px;width:32px;height:32px" viewBox="0 0 32 32"><path d="M16 0.5 L30.56 8.02 L30.56 23.78 L16 31.3 L1.44 23.78 L1.44 8.02Z" fill="#180a02" stroke="#180a02" stroke-width="1.2" stroke-linejoin="round"/><path d="M3.09 8.02 L6.29 6.36 L9.5 8.01 L6.29 9.67ZM7.94 10.52 L11.15 8.86 L14.35 10.51 L11.15 12.17ZM12.8 13.02 L16 11.36 L19.2 13.01 L16 14.67ZM7.94 5.51 L11.15 3.86 L14.35 5.51 L11.15 7.16ZM12.8 8.01 L16 6.36 L19.2 8.01 L16 9.66ZM17.65 10.51 L20.85 8.86 L24.06 10.51 L20.85 12.16ZM12.8 3.01 L16 1.35 L19.2 3 L16 4.66ZM17.65 5.51 L20.85 3.85 L24.06 5.5 L20.85 7.16ZM22.5 8.01 L25.71 6.35 L28.91 8 L25.71 9.66Z" fill="#f08c3e"/><path d="M2.27 9.34 L5.47 10.99 L5.47 14.46 L2.27 12.81ZM2.27 14.59 L5.47 16.24 L5.47 19.71 L2.27 18.06ZM2.27 19.84 L5.47 21.49 L5.47 24.96 L2.27 23.31ZM7.12 11.84 L10.32 13.49 L10.32 16.96 L7.12 15.31ZM7.12 17.09 L10.32 18.74 L10.32 22.21 L7.12 20.56ZM7.12 22.34 L10.32 23.99 L10.32 27.46 L7.12 25.81ZM11.97 14.34 L15.17 15.99 L15.17 19.46 L11.97 17.81ZM11.97 19.59 L15.17 21.24 L15.17 24.71 L11.97 23.06ZM11.97 24.84 L15.17 26.49 L15.17 29.96 L11.97 28.31Z" fill="#ffd08c"/><path d="M16.83 15.99 L20.03 14.34 L20.03 17.81 L16.83 19.46ZM16.83 21.25 L20.03 19.6 L20.03 23.07 L16.83 24.72ZM16.83 26.51 L20.03 24.86 L20.03 28.33 L16.83 29.98ZM21.68 13.49 L24.88 11.84 L24.88 15.31 L21.68 16.96ZM21.68 18.75 L24.88 17.1 L24.88 20.57 L21.68 22.22ZM21.68 24.01 L24.88 22.36 L24.88 25.83 L21.68 27.48ZM26.53 10.99 L29.73 9.34 L29.73 12.81 L26.53 14.46ZM26.53 16.25 L29.73 14.6 L29.73 18.07 L26.53 19.72ZM26.53 21.51 L29.73 19.86 L29.73 23.33 L26.53 24.98Z" fill="#c85c2a"/></svg>
<div class="mbtn" style="left:842px"></div>
<svg style="left:845px;top:148px;width:32px;height:32px" viewBox="0 0 32 32"><path d="M2 8.500h27.500v9H2Z" fill="#8a3a10" stroke="#c06a20" stroke-width=".6"/><path d="M2 11.500c9 0 19 2.500 27.500 6.500l-2 7C19 20.500 10 18.500 2 18.500Z" fill="#f2a01e" stroke="#ffe6b0" stroke-width="1.100" stroke-linejoin="round"/></svg>
<div class="mbtn" style="left:882px"></div>
<svg style="left:885px;top:148px;width:32px;height:32px" viewBox="0 0 32 32"><rect x="2.500" y="4.500" width="27" height="24" rx="2.500" fill="none" stroke="#f5b83a" stroke-width="2.600"/><path d="M2.500 12.500h27M2.500 20.500h27M16 4.500v8M9.500 12.500v8M22.500 12.500v8M16 20.500v8" fill="none" stroke="#f5b83a" stroke-width="2.600"/></svg>
<div class="mbtn" style="left:922px"></div>
<svg style="left:925px;top:148px;width:32px;height:32px" viewBox="0 0 32 32"><path d="M6.500 4.500h14.500l6.500 6.500v14.500a2.500 2.500 0 0 1-2.500 2.500H6.500A2.500 2.500 0 0 1 4 25.500V7a2.500 2.500 0 0 1 2.500-2.500Z" fill="none" stroke="#2fbf8f" stroke-width="2.600" stroke-linejoin="round"/><path d="M9.500 5v6.500h10M9.500 27.500v-10h13v10" fill="none" stroke="#2fbf8f" stroke-width="2.600" stroke-linejoin="round"/></svg>
<div class="mbtn" style="left:962px"></div>
<div style="left:965px;top:148px;width:32px;height:32px;background:linear-gradient(45deg,#ff1060 0%,#ff9020 22%,#e0e020 38%,#40e040 52%,#20f0f0 68%,#4080ff 84%,#8020ff 100%)"></div>
</div><!--/mbtns-->
  <div style="left:703px;top:799px;width:317px;height:1px;background:#171717"></div>
  <div style="left:703px;top:797px;width:112px;height:27px;border:1px solid #343434;border-top:none;border-radius:0 0 4px 4px;background:#1e1e1e"></div>
  <div style="left:816px;top:799px;width:85px;height:23px;border:1px solid #303030;border-top:none;border-radius:0 0 4px 4px;background:#1a1a1a"></div>
  <div class="t" style="left:714.4px;top:806px;letter-spacing:-0.03px">Command Panel</div>
  <div class="t" style="left:826.5px;top:805px;letter-spacing:-0.15px">Power Tools</div>
  <div style="left:699px;top:830px;width:272px;height:22px;background:#2b2b2b;border-radius:2px"></div>
  <div style="left:973px;top:830px;width:22px;height:21px;background:#4a4a4a;border:1px solid #5c5c5c;border-radius:3px"></div>
  <svg style="left:973px;top:830px;width:22px;height:21px" viewBox="0 0 22 21"><circle cx="11" cy="10.500" r="7.800" fill="#86868f"/><path d="M8.500 8l5 5M13.500 8l-5 5" stroke="#5a5a62" stroke-width="1.500"/></svg>
  <svg style="left:1006px;top:841px;width:14px;height:14px" viewBox="0 0 14 14"><path d="M11 3h2v2h-2zM8 6h2v2h-2zM11 6h2v2h-2zM5 9h2v2h-2zM8 9h2v2h-2zM11 9h2v2h-2zM2 12h2v2h-2zM5 12h2v2h-2zM8 12h2v2h-2zM11 12h2v2h-2z" fill="#5e5e5e"/></svg>
</div>
<!-- STATUS -->
<div id="status" class="abs">
  <div class="t" style="left:6px;top:835px;white-space:pre"><span style="letter-spacing:0.11px">Working </span><span style="letter-spacing:-0.06px">Directory: </span><span style="letter-spacing:-0.15px">C:/Users/</span><span style="letter-spacing:0.16px">rvierte/</span><span style="letter-spacing:0.18px">source/</span><span style="letter-spacing:0.06px">repos/</span><span style="letter-spacing:0.29px">cubit_build/</span><span style="letter-spacing:0.61px">bin/</span><span style="letter-spacing:-0.72px">Release</span></div>
</div>
</body>
</html>
